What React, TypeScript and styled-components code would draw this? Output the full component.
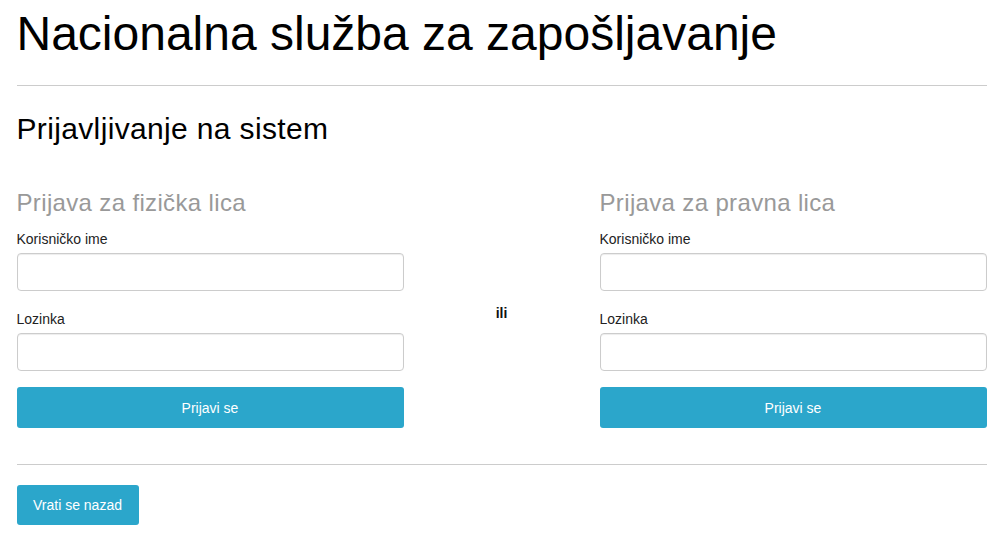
import React from 'react';
import styled, { createGlobalStyle } from 'styled-components';

const GlobalStyle = createGlobalStyle`
  html, body {
    margin: 0;
    padding: 0;
    background: #fff;
  }

  body {
    font-family: 'Liberation Sans', Arial, Helvetica, sans-serif;
    font-size: 14px;
    color: #222;
  }

  * {
    box-sizing: border-box;
  }
`;

const Page = styled.div`
  max-width: 970px;
  margin: 0 auto;
  padding-top: 7px;
`;

const Title = styled.h1`
  margin: 0;
  font-size: 48px;
  line-height: 53px;
  font-weight: normal;
  color: #000;
`;

const Divider = styled.hr<{ $top: number }>`
  margin: ${(p) => p.$top}px 0 0;
  border: 0;
  border-top: 1px solid #ccc;
`;

const Subtitle = styled.h2`
  margin: 26px 0 0;
  font-size: 30px;
  line-height: 33px;
  letter-spacing: 0.35px;
  font-weight: normal;
  color: #000;
`;

const Columns = styled.div`
  display: grid;
  grid-template-columns: 387px 1fr 387px;
  margin-top: 45px;
`;

const LoginForm = styled.form`
  display: flex;
  flex-direction: column;
`;

const FormTitle = styled.h3`
  margin: 0 0 13px;
  font-size: 24px;
  line-height: 26px;
  letter-spacing: 0.35px;
  font-weight: normal;
  color: #999;
`;

const Field = styled.div`
  display: flex;
  flex-direction: column;
  margin-bottom: 18px;

  &:last-of-type {
    margin-bottom: 16px;
  }
`;

const Label = styled.label`
  font-size: 14px;
  line-height: 20px;
  margin-bottom: 4px;
  color: #222;
`;

const Input = styled.input`
  height: 38px;
  padding: 6px 12px;
  font: inherit;
  border: 1px solid #ccc;
  border-radius: 4px;
  box-shadow: inset 0 1px 1px rgba(0, 0, 0, 0.075);
  background: #fff;
`;

const Button = styled.button<{ $block?: boolean }>`
  display: inline-flex;
  align-items: center;
  justify-content: center;
  width: ${(p) => (p.$block ? '100%' : '122px')};
  height: ${(p) => (p.$block ? '41px' : '40px')};
  padding: 0;
  border: 0;
  border-radius: 3px;
  background: #2ba6cb;
  color: #fff;
  font-family: 'Liberation Sans', Arial, Helvetica, sans-serif;
  font-size: 14px;
  cursor: pointer;
`;

const Separator = styled.div`
  padding-top: 113px;
  text-align: center;
  font-weight: bold;
  font-size: 14px;
  line-height: 20px;
  color: #111;
`;

const Footer = styled.div`
  margin-top: 20px;
`;

const Login = ({ title }: { title: string }) => (
  <LoginForm onSubmit={(e) => e.preventDefault()}>
    <FormTitle>{title}</FormTitle>
    <Field>
      <Label>Korisničko ime</Label>
      <Input type="text" />
    </Field>
    <Field>
      <Label>Lozinka</Label>
      <Input type="password" />
    </Field>
    <Button $block type="submit">
      Prijavi se
    </Button>
  </LoginForm>
);

const App = () => (
  <Page>
    <GlobalStyle />
    <Title>Nacionalna služba za zapošljavanje</Title>
    <Divider $top={25} />
    <Subtitle>Prijavljivanje na sistem</Subtitle>
    <Columns>
      <Login title="Prijava za fizička lica" />
      <Separator>ili</Separator>
      <Login title="Prijava za pravna lica" />
    </Columns>
    <Divider $top={36} />
    <Footer>
      <Button type="button">Vrati se nazad</Button>
    </Footer>
  </Page>
);

export default App;
